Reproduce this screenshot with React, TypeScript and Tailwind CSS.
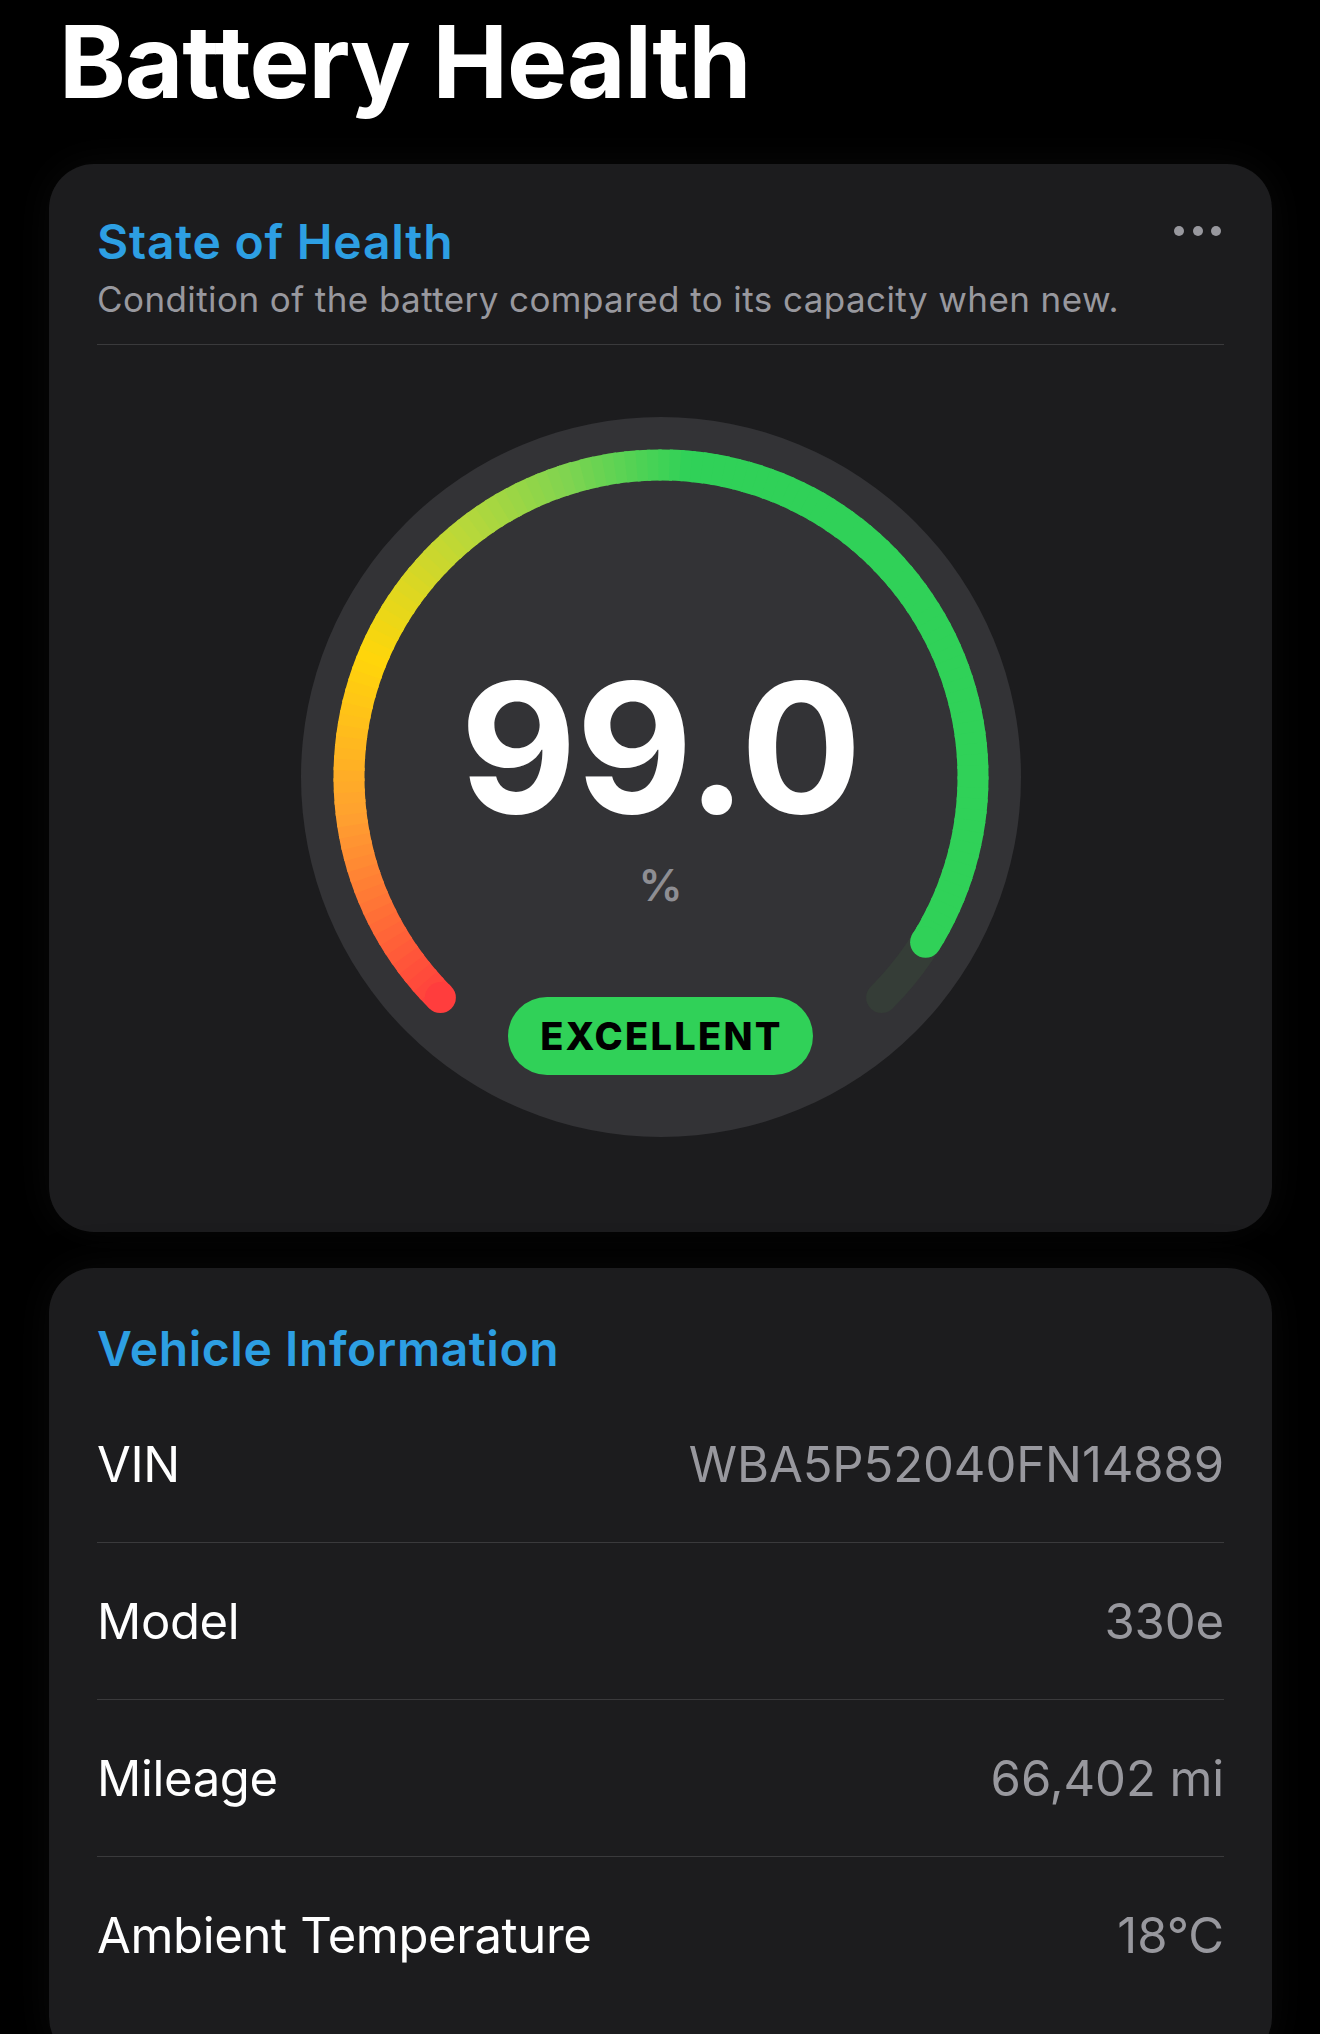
import React from "react";

const CX = 360;
const CY = 360;
const R = 312;
const START = 225;
const TOTAL = 270;
const VALUE_SWEEP = 257;

const STOPS: [number, string][] = [
  [0, "#ff3d3d"],
  [38, "#ffa030"],
  [68, "#ffd60a"],
  [97, "#b8d83a"],
  [118, "#7fd450"],
  [140, "#30d158"],
  [360, "#30d158"],
];

function hex(c: string) {
  return [1, 3, 5].map(i => parseInt(c.slice(i, i + 2), 16));
}

function colorAt(t: number) {
  for (let i = 0; i < STOPS.length - 1; i++) {
    const [t0, c0] = STOPS[i];
    const [t1, c1] = STOPS[i + 1];
    if (t >= t0 && t <= t1) {
      const k = (t - t0) / (t1 - t0);
      const a = hex(c0);
      const b = hex(c1);
      const m = a.map((v, j) => Math.round(v + (b[j] - v) * k));
      return `rgb(${m[0]},${m[1]},${m[2]})`;
    }
  }
  return "#30d158";
}

function point(t: number) {
  const a = ((START - t) * Math.PI) / 180;
  return [CX + R * Math.cos(a), CY - R * Math.sin(a)];
}

function arc(t0: number, t1: number) {
  const [x0, y0] = point(t0);
  const [x1, y1] = point(t1);
  const large = t1 - t0 > 180 ? 1 : 0;
  return `M ${x0} ${y0} A ${R} ${R} 0 ${large} 1 ${x1} ${y1}`;
}

function Gauge() {
  const steps = 128;
  const segs = [];
  for (let i = 0; i < steps; i++) {
    const t0 = (VALUE_SWEEP * i) / steps;
    const t1 = Math.min(VALUE_SWEEP, (VALUE_SWEEP * (i + 1)) / steps + 0.6);
    segs.push(
      <path key={i} d={arc(t0, t1)} stroke={colorAt((t0 + t1) / 2)} strokeWidth={31} fill="none" />
    );
  }
  const [sx, sy] = point(0);
  const [ex, ey] = point(VALUE_SWEEP);

  return (
    <div className="relative mx-auto w-[720px] h-[720px] rounded-full bg-[#333336]">
      <svg className="absolute inset-0" width="720" height="720" viewBox="0 0 720 720">
        <path d={arc(0, TOTAL)} stroke="#353d37" strokeWidth={31} strokeLinecap="round" fill="none" />
        {segs}
        <circle cx={sx} cy={sy} r={15.5} fill={colorAt(0)} />
        <circle cx={ex} cy={ey} r={15.5} fill={colorAt(VALUE_SWEEP)} />
      </svg>
      <div className="relative flex flex-col items-center pt-[241px]">
        <div className="text-[180px] leading-[180px] font-bold text-white tracking-[-0.005em]">99.0</div>
        <div className="mt-[25px] text-[44px] leading-[44px] font-semibold text-[#8e8e93]">%</div>
        <div className="mt-[90px] h-[78px] w-[305px] rounded-full bg-[#30d158] flex items-center justify-center">
          <span className="pl-[2px] text-[38px] font-extrabold text-black tracking-[0.06em]">EXCELLENT</span>
        </div>
      </div>
    </div>
  );
}

const rows = [
  { label: "VIN", value: "WBA5P52040FN14889" },
  { label: "Model", value: "330e" },
  { label: "Mileage", value: "66,402 mi" },
  { label: "Ambient Temperature", value: "18°C" },
];

export default function App() {
  return (
    <div className="w-full h-[2034px] overflow-hidden bg-black pl-[49px] pr-[48px] font-[Inter,sans-serif]">
      <h1 className="pt-[10px] pl-[10px] text-[101px] leading-[102px] font-bold text-white tracking-[-0.011em]">
        Battery Health
      </h1>

      <section className="mt-[52px] rounded-[45px] bg-[#1c1c1e] px-[48px] pt-[54px] pb-[95px] shadow-[0_0_40px_rgba(28,28,30,0.35)]">
        <div className="flex items-start justify-between">
          <div>
            <h2 className="text-[48px] leading-[48px] font-semibold text-[#2d9fe3] tracking-[0.016em]">State of Health</h2>
            <p className="mt-[13px] text-[35px] leading-[40px] text-[#98989e] tracking-[0.012em]">
              Condition of the battery compared to its capacity when new.
            </p>
          </div>
          <div className="flex gap-[8.5px] pt-[8px] pr-[3px]">
            <span className="w-[10px] h-[10px] rounded-full bg-[#98989e]" />
            <span className="w-[10px] h-[10px] rounded-full bg-[#98989e]" />
            <span className="w-[10px] h-[10px] rounded-full bg-[#98989e]" />
          </div>
        </div>
        <div className="mt-[25px] h-px bg-[#3a3a3c]" />
        <div className="mt-[72px]">
          <Gauge />
        </div>
      </section>

      <section className="mt-[36px] rounded-[45px] bg-[#1c1c1e] px-[48px] pt-[57px] pb-[48px] shadow-[0_0_40px_rgba(28,28,30,0.35)]">
        <h2 className="mb-[13px] text-[48px] leading-[48px] font-semibold text-[#2d9fe3] tracking-[0.012em]">Vehicle Information</h2>
        {rows.map((row, i) => (
          <div
            key={row.label}
            className={`flex h-[157px] items-center justify-between ${i < rows.length - 1 ? "border-b border-[#3a3a3c]" : ""}`}
          >
            <span className="text-[49px] leading-[61px] text-white tracking-[-0.007em]">{row.label}</span>
            <span className="text-[49px] leading-[61px] text-[#98989e] tracking-[-0.002em]">{row.value}</span>
          </div>
        ))}
      </section>
    </div>
  );
}
